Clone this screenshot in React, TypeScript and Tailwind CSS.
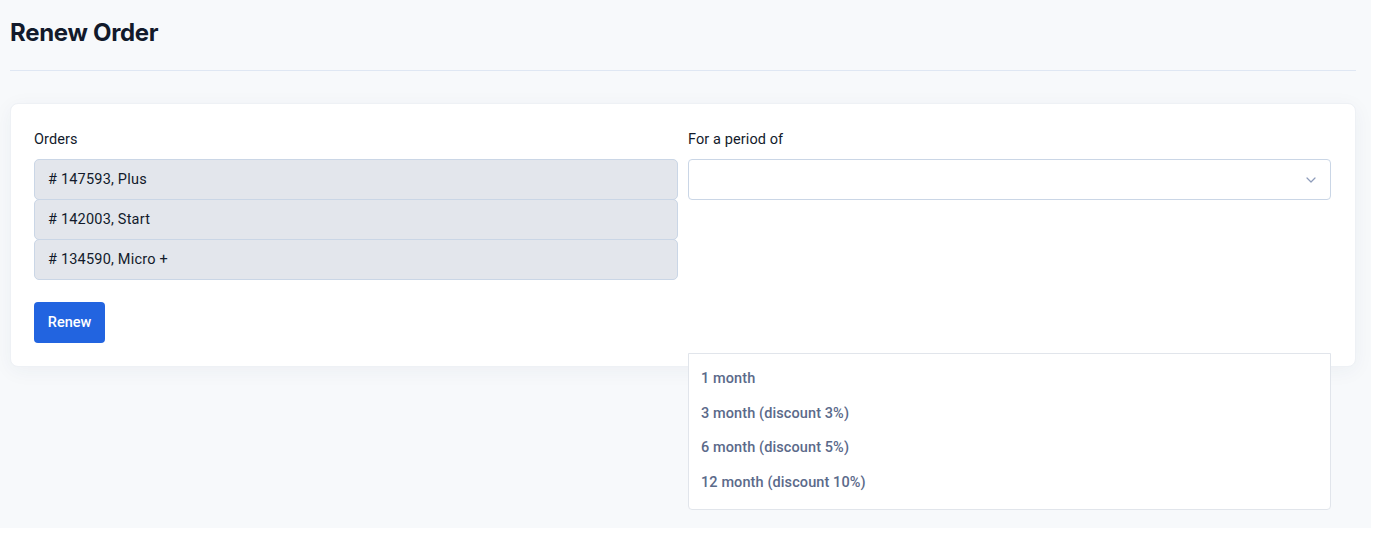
import React from 'react';

const orders = ['# 147593, Plus', '# 142003, Start', '# 134590, Micro +'];
const periods = ['1 month', '3 month (discount 3%)', '6 month (discount 5%)', '12 month (discount 10%)'];

const App: React.FC = () => {
    return (
        <div className="w-[1371px] h-[528px] bg-[#f7f9fb] px-[10px] pt-[18px] font-['Roboto',sans-serif] text-[#121a2b]">
            {/* Page header */}
            <h1 className="text-[24px] leading-[30px] font-bold font-['Inter',sans-serif] tracking-[-0.3px]">Renew Order</h1>
            <div className="w-[1346px] h-px bg-[#dfe7f3] mt-[22px]" />

            {/* Card */}
            <div className="w-[1346px] mt-[32px] bg-white rounded-lg border border-[#eef1f5] shadow-[0_4px_20px_rgba(30,50,90,0.05)] px-[23px] pt-[26px] pb-[23px]">
                <div className="flex gap-[10px]">
                    <div className="w-[644px]">
                        <label className="block text-[14.5px] leading-5 mb-[9px] tracking-[0.1px]">Orders</label>
                        <div className="flex flex-col">
                            {orders.map((o, i) => (
                                <div
                                    key={i}
                                    className="h-[41px] -mt-px first:mt-0 flex items-center px-[13px] bg-[#e3e6ec] border border-[#cad6e6] rounded-[5px] text-[14.5px] tracking-[0.2px]"
                                >
                                    {o}
                                </div>
                            ))}
                        </div>
                        <button className="mt-[22px] h-[41px] w-[71px] bg-[#2264e0] text-white text-[14.5px] font-medium rounded-[4px]">
                            Renew
                        </button>
                    </div>

                    <div className="w-[643px] relative">
                        <label className="block text-[14.5px] leading-5 mb-[9px] tracking-[0.1px]">For a period of</label>
                        <div className="h-[41px] bg-white border border-[#cad6e6] rounded-[4px] flex items-center justify-end pr-[13px]">
                            <svg width="12" height="8" viewBox="0 0 12 8" fill="none">
                                <path d="M2 2l4 4 4-4" stroke="#8e9cba" strokeWidth="1.2" strokeLinecap="round" strokeLinejoin="round" />
                            </svg>
                        </div>

                        {/* Open dropdown list */}
                        <div className="absolute left-0 top-[223px] w-[643px] bg-white border border-[#e1e5eb] rounded-b-[4px] pt-[8px] pb-[9px] z-10">
                            {periods.map((p, i) => (
                                <div key={i} className="px-[12px] h-[34.5px] flex items-center text-[14.5px] font-medium text-[#5b6a8a] tracking-[0.1px]">
                                    {p}
                                </div>
                            ))}
                        </div>
                    </div>
                </div>
            </div>
        </div>
    );
};

export default App;
